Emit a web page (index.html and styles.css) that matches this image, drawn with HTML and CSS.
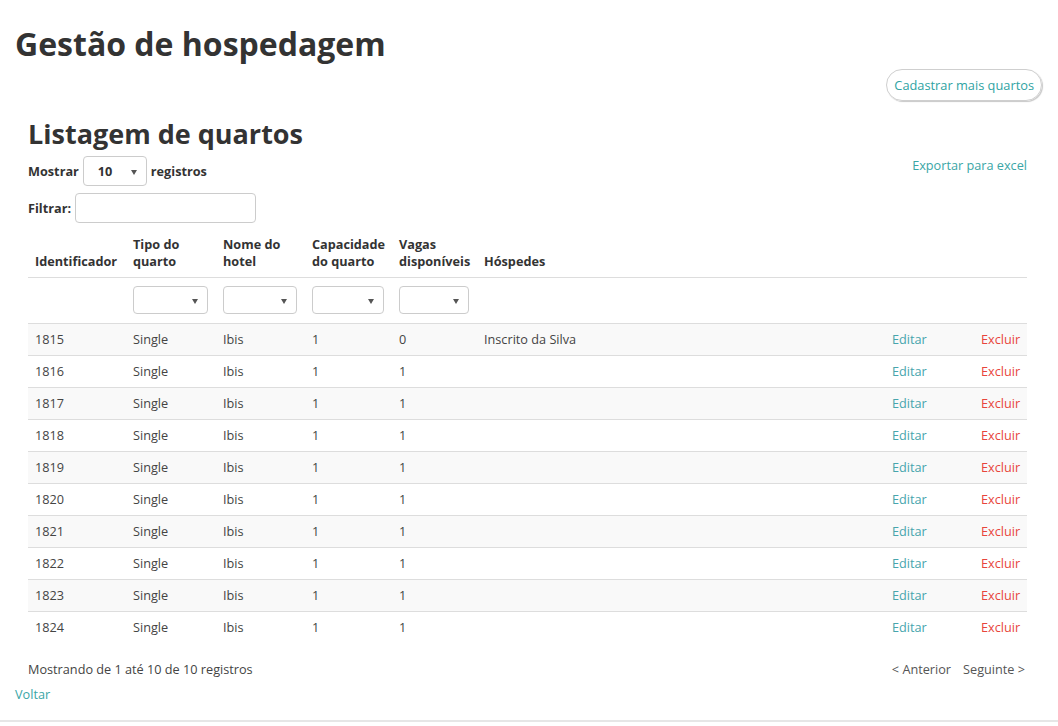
FILE: index.html
```html
<!DOCTYPE html>
<html lang="pt-BR">
<head>
  <meta charset="UTF-8">
  <title>Gestão de hospedagem</title>
  <link rel="stylesheet" href="styles.css">
</head>
<body>
  <div class="page">
    <h1 class="page-title">Gestão de hospedagem</h1>
    <div class="actions">
      <a class="pill-button" href="#">Cadastrar mais quartos</a>
    </div>

    <section class="listing">
      <h2 class="listing-title">Listagem de quartos</h2>

      <div class="toolbar">
        <div class="toolbar-left">
          <div class="length-row">
            <span class="label">Mostrar</span>
            <div class="fake-select length-select"><span>10</span><i class="caret"></i></div>
            <span class="label">registros</span>
          </div>
          <div class="filter-row">
            <span class="label">Filtrar:</span>
            <div class="text-input"></div>
          </div>
        </div>
        <a class="export-link" href="#">Exportar para excel</a>
      </div>

      <table class="rooms">
        <colgroup>
          <col style="width:98px">
          <col style="width:90px">
          <col style="width:89px">
          <col style="width:87px">
          <col style="width:85px">
          <col>
          <col style="width:89px">
          <col style="width:53px">
        </colgroup>
        <thead>
          <tr class="head-row">
            <th>Identificador</th>
            <th>Tipo do<br>quarto</th>
            <th>Nome do<br>hotel</th>
            <th>Capacidade<br>do quarto</th>
            <th>Vagas<br>disponíveis</th>
            <th>Hóspedes</th>
            <th></th>
            <th></th>
          </tr>
          <tr class="filters-row">
            <td></td>
            <td><div class="fake-select w75"><i class="caret"></i></div></td>
            <td><div class="fake-select w74"><i class="caret"></i></div></td>
            <td><div class="fake-select w72"><i class="caret"></i></div></td>
            <td><div class="fake-select w70"><i class="caret"></i></div></td>
            <td></td>
            <td></td>
            <td></td>
          </tr>
        </thead>
        <tbody id="rows"></tbody>
      </table>

      <div class="table-footer">
        <span>Mostrando de 1 até 10 de 10 registros</span>
        <div class="pager">
          <a href="#">&lt; Anterior</a>
          <a href="#">Seguinte &gt;</a>
        </div>
      </div>
    </section>

    <a class="back-link" href="#">Voltar</a>
  </div>
  <footer class="page-footer"></footer>

  <script>
    const tbody = document.getElementById('rows');
    for (let id = 1815; id <= 1824; id++) {
      const guest = id === 1815 ? 'Inscrito da Silva' : '';
      const vagas = id === 1815 ? 0 : 1;
      const tr = document.createElement('tr');
      tr.innerHTML = `
        <td>${id}</td>
        <td>Single</td>
        <td>Ibis</td>
        <td>1</td>
        <td>${vagas}</td>
        <td>${guest}</td>
        <td><a class="edit" href="#">Editar</a></td>
        <td><a class="delete" href="#">Excluir</a></td>`;
      tbody.appendChild(tr);
    }
  </script>
</body>
</html>
```

FILE: styles.css
```css
body {
  margin: 0;
  font-family: 'Open Sans', 'Liberation Sans', sans-serif;
  font-size: 12.7px;
  color: #333;
  background: #fff;
}

a {
  text-decoration: none;
}

.page {
  padding: 0 16px 0 15px;
  height: 720px;
  box-sizing: border-box;
}

/* Title */
.page-title {
  margin: 0;
  padding-top: 22px;
  font-size: 32px;
  line-height: 44px;
  font-weight: 700;
  color: #333;
}

.actions {
  display: flex;
  justify-content: flex-end;
  margin-top: 3px;
}

.pill-button {
  display: inline-block;
  padding: 0 7px;
  height: 30px;
  line-height: 30px;
  border: 1px solid #cfcfcf;
  border-radius: 16px;
  box-shadow: 1px 1px 1px #c8c8c8;
  color: #2fa3a3;
  font-size: 12.8px;
}

/* Listing */
.listing {
  padding: 0 15px 0 13px;
}

.listing-title {
  margin: 15px 0 0;
  font-size: 27px;
  line-height: 36px;
  font-weight: 700;
  color: #333;
}

.toolbar {
  display: flex;
  justify-content: space-between;
  align-items: flex-start;
  margin-top: 4px;
}

.toolbar-left {
  display: flex;
  flex-direction: column;
  gap: 7px;
}

.length-row,
.filter-row {
  display: flex;
  align-items: center;
  gap: 4px;
}

.label {
  font-weight: 700;
  color: #333;
}

.export-link {
  color: #3aa6a6;
}

.fake-select {
  position: relative;
  box-sizing: border-box;
  height: 28px;
  border: 1px solid #ccc;
  border-radius: 4px;
  background: #fff;
}

.fake-select .caret {
  position: absolute;
  right: 9px;
  top: 12px;
  width: 0;
  height: 0;
  border-left: 3px solid transparent;
  border-right: 3px solid transparent;
  border-top: 5px solid #555;
}

.length-select {
  width: 64px;
  height: 30px;
  line-height: 28px;
  padding-left: 14px;
  font-weight: 700;
}

.length-select .caret {
  top: 13px;
}

.text-input {
  box-sizing: border-box;
  width: 181px;
  height: 30px;
  border: 1px solid #ccc;
  border-radius: 4px;
}

.w75 { width: 75px; }
.w74 { width: 74px; }
.w72 { width: 72px; }
.w70 { width: 70px; }

/* Table */
.rooms {
  width: 100%;
  margin-top: 5px;
  border-collapse: collapse;
  table-layout: fixed;
}

.rooms th {
  text-align: left;
  vertical-align: bottom;
  font-weight: 700;
  line-height: 17px;
  padding: 8px 7px 7px;
  border-bottom: 1px solid #ddd;
  color: #333;
}

.filters-row td {
  padding: 8px 7px 9px;
  border-bottom: 1px solid #ddd;
}

.rooms tbody td {
  padding: 7px 7px;
  line-height: 17px;
  color: #444;
  border-top: 1px solid #ddd;
  white-space: nowrap;
}

.rooms tbody tr:first-child td {
  border-top: none;
}

.rooms tbody tr:nth-child(odd) {
  background: #f9f9f9;
}

.edit {
  color: #47a5ad;
}

.delete {
  color: #e8453c;
}

/* Footer of table */
.table-footer {
  display: flex;
  justify-content: space-between;
  margin-top: 17px;
  color: #444;
}

.pager {
  display: flex;
  gap: 12px;
  padding-right: 2px;
}

.pager a {
  color: #555;
}

.back-link {
  display: inline-block;
  margin-top: 7px;
  color: #3aa6a6;
}

.page-footer {
  border-top: 2px solid #e6e6e6;
}
```
